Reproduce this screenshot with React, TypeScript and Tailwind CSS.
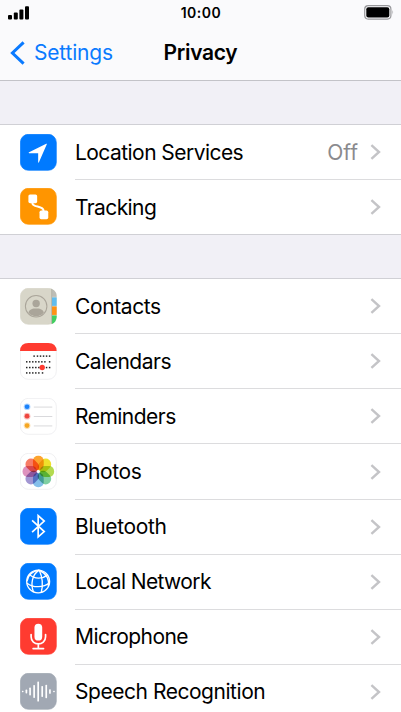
import React from "react";

interface SettingRow {
  label: string;
  value?: string;
  icon: React.ReactNode;
  tracking: string;
}

const PETALS = [
  "#fda42f",
  "#efe12c",
  "#b3da50",
  "#7fcfa2",
  "#84bfea",
  "#a296d2",
  "#de92be",
  "#f77c66",
];

const WAVE = [
  [8, 4],
  [19, 12],
  [30, 24],
  [42, 38],
  [54, 60],
  [66, 32],
  [78, 40],
  [89, 14],
  [101, 4],
];

const CALENDAR_DOTS = [
  { y: 39, xs: [42, 52, 61, 70, 79, 88] },
  { y: 56, xs: [20, 29, 38, 47, 56, 65, 74, 88] },
  { y: 73, xs: [20, 29, 38, 47, 56, 65, 79, 88] },
  { y: 89, xs: [20, 29, 38, 47, 56, 67] },
];

function Tile({ fill, outlined, children }: { fill: string; outlined?: boolean; children: React.ReactNode }) {
  return (
    <svg viewBox="0 0 110 110" className="isolate mb-px size-[37px] shrink-0">
      <rect
        x="1"
        y="1"
        width="107"
        height="107"
        rx="24"
        fill={fill}
        stroke={outlined ? "#e9e9eb" : fill}
        strokeWidth="2"
      />
      {children}
    </svg>
  );
}

function LocationIcon() {
  return (
    <Tile fill="#007aff">
      <path d="M80 30 L56 85 Q54 86 54 83 V57 H27 Q24 56 27 54 L78 29 Q81 28 80 30Z" fill="#fff" />
    </Tile>
  );
}

function TrackingIcon() {
  return (
    <Tile fill="#ff9500">
      <path d="M37 36 V45 C37 59 70 51 70 68 V78" fill="none" stroke="#fff" strokeWidth="6" />
      <rect x="25" y="19" width="26" height="26" rx="5" fill="#fff" />
      <rect x="58" y="67" width="26" height="26" rx="5" fill="#fff" />
    </Tile>
  );
}

function ContactsIcon() {
  return (
    <Tile fill="#d8d6c9">
      <path d="M95 4 Q109 9 109 26 H95Z" fill="#bdbdb6" />
      <rect x="95" y="28" width="14" height="25" fill="#5fbdf0" />
      <rect x="95" y="55" width="14" height="25" fill="#ff9114" />
      <path d="M95 82 H109 V86 Q108 102 95 107Z" fill="#40cf60" />
      <path d="M94 3 V107" stroke="#aaa99d" strokeWidth="2" />
      <circle cx="48" cy="54" r="32" fill="none" stroke="#aaa59a" strokeWidth="3" />
      <circle cx="48" cy="46" r="11" fill="#aaa59a" />
      <path d="M25 73 C29 62 38 61 48 61 S67 62 71 73 C60 88 36 88 25 73Z" fill="#aaa59a" />
    </Tile>
  );
}

function CalendarIcon() {
  return (
    <Tile fill="#fff" outlined>
      <path d="M0 24 Q1 0 25 0 H84 Q108 0 109 24Z" fill="#ff3b30" />
      {CALENDAR_DOTS.map((row) =>
        row.xs.map((x) => (
          <rect key={`${row.y}-${x}`} x={x - 2.2} y={row.y - 2.2} width="4.4" height="4.4" fill="#222" />
        ))
      )}
      <circle cx="66" cy="73" r="8" fill="#ff3b30" />
    </Tile>
  );
}

function RemindersIcon() {
  return (
    <Tile fill="#fff" outlined>
      {["#1a82fb", "#ee453e", "#f5a623"].map((color, i) => (
        <g key={color}>
          <circle cx="21" cy={26 + i * 28} r="10" fill={color} fillOpacity="0.35" />
          <circle cx="21" cy={26 + i * 28} r="7" fill={color} />
          <path d={`M41 ${27 + i * 28} H96`} stroke="#d9d9dc" strokeWidth="3" />
        </g>
      ))}
    </Tile>
  );
}

function PhotosIcon() {
  return (
    <Tile fill="#fff" outlined>
      {PETALS.map((color, i) => (
        <rect
          key={color}
          x="38.5"
          y="8"
          width="32"
          height="43"
          rx="15"
          fill={color}
          transform={`rotate(${i * 45} 54.5 55)`}
          className="mix-blend-multiply"
        />
      ))}
      <circle cx="54.5" cy="55" r="4" fill="#fff" />
    </Tile>
  );
}

function BluetoothIcon() {
  return (
    <Tile fill="#007aff">
      <path
        d="M36 37 L72 70 L54 86 V23 L72 39 L36 72"
        fill="none"
        stroke="#fff"
        strokeWidth="5"
        strokeLinejoin="miter"
      />
    </Tile>
  );
}

function NetworkIcon() {
  return (
    <Tile fill="#007aff">
      <g fill="none" stroke="#fff" strokeWidth="4">
        <circle cx="54" cy="55" r="34" />
        <path d="M57 21 C36 34 31 62 40 86" />
        <path d="M57 21 C65 38 70 62 63 88" />
        <path d="M57 21 C78 32 88 50 84 70" />
        <path d="M57 21 C38 24 24 36 21 54" />
        <path d="M28 34 C43 48 66 48 82 36" />
        <path d="M21 60 C38 74 70 74 88 59" />
      </g>
    </Tile>
  );
}

function MicrophoneIcon() {
  return (
    <Tile fill="#ff3b30">
      <rect x="43" y="17" width="23" height="50" rx="11.5" fill="#fff" />
      <path
        d="M33 49 V56 C33 84 76 84 76 56 V49 M54.5 77 V91 M39 91 H70"
        fill="none"
        stroke="#fff"
        strokeWidth="5"
        strokeLinecap="round"
      />
    </Tile>
  );
}

function SpeechIcon() {
  return (
    <Tile fill="#a1a8b3">
      {WAVE.map(([x, h]) => (
        <rect key={x} x={x - 2.5} y={55 - h / 2} width="5" height={h} rx="2" fill="#fff" />
      ))}
    </Tile>
  );
}

const GENERAL: SettingRow[] = [
  { label: "Location Services", value: "Off", icon: <LocationIcon />, tracking: "tracking-[-0.55px]" },
  { label: "Tracking", icon: <TrackingIcon />, tracking: "tracking-[-0.6px]" },
];

const PERMISSIONS: SettingRow[] = [
  { label: "Contacts", icon: <ContactsIcon />, tracking: "tracking-[-0.38px]" },
  { label: "Calendars", icon: <CalendarIcon />, tracking: "tracking-[-0.5px]" },
  { label: "Reminders", icon: <RemindersIcon />, tracking: "tracking-[-0.52px]" },
  { label: "Photos", icon: <PhotosIcon />, tracking: "tracking-[-0.38px]" },
  { label: "Bluetooth", icon: <BluetoothIcon />, tracking: "tracking-[-0.34px]" },
  { label: "Local Network", icon: <NetworkIcon />, tracking: "tracking-[-0.62px]" },
  { label: "Microphone", icon: <MicrophoneIcon />, tracking: "tracking-[-0.58px]" },
  { label: "Speech Recognition", icon: <SpeechIcon />, tracking: "tracking-[-0.46px]" },
];

function Section({ rows }: { rows: SettingRow[] }) {
  return (
    <ul className="border-y border-[#d0d0d5] bg-white">
      {rows.map((row, i) => (
        <li key={row.label} className="flex h-[55.1px] items-center pl-5 last:h-[54.1px]">
          {row.icon}
          <div
            className={`ml-[18px] flex h-full flex-1 items-center pr-5 ${
              i < rows.length - 1 ? "border-b border-[#dcdcde]" : ""
            }`}
          >
            <span className={`flex-1 text-[21px] leading-none whitespace-nowrap text-black ${row.tracking}`}>
              {row.label}
            </span>
            {row.value && <span className="mr-3 text-[21px] leading-none text-[#8a8a8e]">{row.value}</span>}
            <svg viewBox="0 0 11 16" className="h-4 w-[11px] shrink-0">
              <path d="M1.4 1.2 L9 8 L1.4 14.8" fill="none" stroke="#c4c4c7" strokeWidth="2.4" />
            </svg>
          </div>
        </li>
      ))}
    </ul>
  );
}

export default function App() {
  return (
    <div className="h-[712px] w-[401px] overflow-hidden bg-[#f1f0f6] font-['Inter','Liberation_Sans',sans-serif]">
      <header className="h-[81px] border-b border-[#c3c3c8] bg-[#fafafc]">
        {/* Status bar */}
        <div className="grid h-[25px] grid-cols-3 items-center pr-[7px] pl-2">
          <svg viewBox="0 0 22 14" className="h-3.5 w-[22px]">
            <rect x="0" y="9" width="4" height="4.5" rx="1" />
            <rect x="5.8" y="6.5" width="4" height="7" rx="1" />
            <rect x="11.4" y="3.5" width="4" height="10" rx="1" />
            <rect x="17" y="0.3" width="4" height="13.2" rx="1" />
          </svg>
          <span className="text-center text-[14px] leading-none font-semibold tracking-[0.5px]">10:00</span>
          <svg viewBox="0 0 30 15" className="h-[15px] w-[30px] justify-self-end">
            <rect x="0.7" y="0.7" width="26.2" height="13.4" rx="3.5" fill="none" stroke="#98989b" strokeWidth="1.2" />
            <rect x="2.3" y="2.3" width="23" height="10.2" rx="2" />
            <path d="M28.5 5 Q30 7.4 28.5 9.8Z" fill="#98989b" />
          </svg>
        </div>
        {/* Navigation bar */}
        <div className="grid h-[55px] grid-cols-3 items-center">
          <button className="flex items-center gap-[9px] pl-2.5 text-[#0a7aff]">
            <svg viewBox="0 0 15 24" className="h-6 w-[15px]">
              <path d="M13.6 1.3 L2.4 12 L13.6 22.7" fill="none" stroke="currentColor" strokeWidth="3" />
            </svg>
            <span className="text-[21px] leading-none tracking-[-0.2px]">Settings</span>
          </button>
          <h1 className="text-center text-[21px] leading-none font-semibold tracking-[-0.3px]">Privacy</h1>
        </div>
      </header>
      <main className="flex flex-col gap-[43px] pt-[43px]">
        <Section rows={GENERAL} />
        <Section rows={PERMISSIONS} />
      </main>
    </div>
  );
}
